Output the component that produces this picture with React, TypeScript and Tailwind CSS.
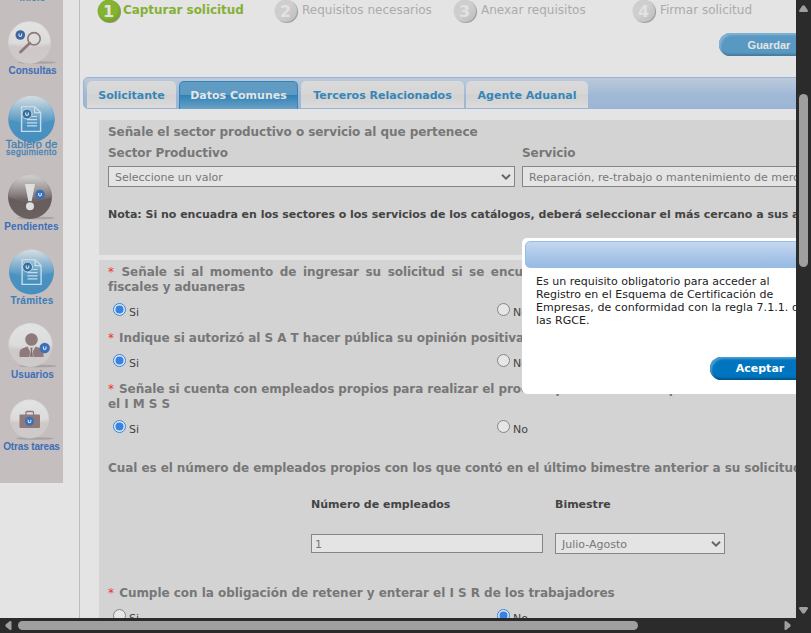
import type { ReactNode } from 'react';

const VERDANA = "font-['DejaVu_Sans',Verdana,sans-serif]";
const ARIAL = "font-['Liberation_Sans',Arial,sans-serif]";

function Defs() {
  return (
    <svg width="0" height="0" className="absolute" aria-hidden="true">
      <defs>
        <linearGradient id="pale" x1="0" y1="0" x2="0" y2="1">
          <stop offset="0" stopColor="#dedede" />
          <stop offset="0.5" stopColor="#d9d7d7" />
          <stop offset="0.62" stopColor="#cec8c8" />
          <stop offset="1" stopColor="#d0cbcb" />
        </linearGradient>
        <linearGradient id="blue" x1="0" y1="0" x2="0" y2="1">
          <stop offset="0" stopColor="#d4dce1" />
          <stop offset="0.3" stopColor="#82b1cf" />
          <stop offset="0.55" stopColor="#4b92c0" />
          <stop offset="1" stopColor="#458fbf" />
        </linearGradient>
        <linearGradient id="brown" x1="0" y1="0" x2="0" y2="1">
          <stop offset="0" stopColor="#cfcdcd" />
          <stop offset="0.45" stopColor="#7c7372" />
          <stop offset="0.55" stopColor="#665c5b" />
          <stop offset="1" stopColor="#6b6160" />
        </linearGradient>
        <linearGradient id="gloss" x1="0" y1="0" x2="0" y2="1">
          <stop offset="0" stopColor="#e6e6e6" stopOpacity="0.8" />
          <stop offset="1" stopColor="#e6e6e6" stopOpacity="0.25" />
        </linearGradient>
        <radialGradient id="stepGreen" cx="0.45" cy="0.4" r="0.6">
          <stop offset="0.7" stopColor="#84b32f" />
          <stop offset="1" stopColor="#71a024" />
        </radialGradient>
        <linearGradient id="stepGrey" x1="0" y1="0" x2="1" y2="1">
          <stop offset="0.5" stopColor="#cecece" />
          <stop offset="1" stopColor="#bcbcbc" />
        </linearGradient>
      </defs>
    </svg>
  );
}

function Badge({ x, y, r = 4.8, fill = '#3a70ba' }: { x: number; y: number; r?: number; fill?: string }) {
  return (
    <g>
      <circle cx={x} cy={y} r={r} fill={fill} />
      <path d={`M${x - 1.3} ${y - 1.6}v1.800q0 1.200 1.300 1.200t1.300 -1.200v-1.800`} fill="none" stroke="#dfe6ee" strokeWidth="1.1" />
    </g>
  );
}

function Ball({ x, y, r, fill }: { x: number; y: number; r: number; fill: string }) {
  return (
    <g>
      <circle cx={x} cy={y} r={r} fill={`url(#${fill})`} />
      <path
        d={`M${x - r + 1} ${y}A${r - 1} ${r - 1} 0 0 1 ${x + r - 1} ${y}Q${x} ${y + r * 0.45} ${x - r + 1} ${y}Z`}
        fill="url(#gloss)"
        opacity={fill === 'pale' ? 0.7 : 0.25}
      />
    </g>
  );
}

function Shadow({ x, y }: { x: number; y: number }) {
  return <ellipse cx={x} cy={y} rx="19" ry="1.3" fill="#a09b9a" opacity="0.75" />;
}

function DocGlyph({ x, y }: { x: number; y: number }) {
  return (
    <g transform={`translate(${x} ${y})`} fill="none" stroke="#c9dbe7">
      <path d="M.6 .6h13l6 6v18.800h-19z" strokeWidth="1.4" />
      <path d="M13.600 .6v6h6" strokeWidth="1.4" />
      <path d="M11 10.500h5M6 13.700h10M6 16.800h10M6 19.900h10" strokeWidth="1.2" />
      <Badge x={6} y={8} r={5} fill="#35719f" />
    </g>
  );
}

function NavItem({ top, height, label, labelClass, children }: {
  top: number; height: number; label: ReactNode; labelClass: string; children: ReactNode;
}) {
  return (
    <li className="flex w-[63px] flex-col items-center">
      <svg width="63" height={height} viewBox={`0 ${top} 63 ${height}`} className="block shrink-0 overflow-visible">{children}</svg>
      <span className={`relative block whitespace-nowrap text-center text-[10px] font-bold leading-[12px] text-[#3c6eb8] ${labelClass}`}>{label}</span>
    </li>
  );
}

function Sidebar() {
  return (
    <ul className={`h-[483px] w-[63px] shrink-0 overflow-hidden bg-[#c4bfbe] ${ARIAL}`}>
      <li className="-mt-[8px] h-[28px] pl-[2px] text-center text-[10px] font-bold leading-[12px] text-[#4389b9]">Inicio</li>
      <NavItem top={20} height={45} label="Consultas" labelClass="pl-[2px] tracking-[-0.05px]">
        <Shadow x={37} y={62.500} />
        <Ball x={29.500} y={42.500} r={21.300} fill="pale" />
        <circle cx="34" cy="38.800" r="6.200" fill="none" stroke="#8d7978" strokeWidth="1.600" />
        <path d="M29.700 43.300L20.500 52" stroke="#8d7978" strokeWidth="2.800" strokeLinecap="round" />
        <Badge x={20.300} y={35} fill="#3b659f" />
      </NavItem>
      <NavItem
        top={77}
        height={62}
        label={<><span className="block text-[11px] leading-[9px] tracking-[0.05px]">Tablero de</span><span className="block text-[8.500px] leading-[6px] tracking-[0.45px]">seguimiento</span></>}
        labelClass="h-[18px] !font-normal [-webkit-text-stroke:0.3px] !text-[#4482b3] !leading-none pt-[1px]"
      >
        <Ball x={31.500} y={119} r={23.300} fill="blue" />
        <DocGlyph x={21} y={106} />
      </NavItem>
      <NavItem top={157} height={64} label="Pendientes" labelClass="tracking-[0.1px]">
        <Shadow x={36} y={218} />
        <Ball x={30} y={197} r={22} fill="brown" />
        <path d="M25 184h10l-3.300 17h-3.400z" fill="#dedede" />
        <circle cx="30" cy="206.300" r="4" fill="#dedede" />
        <Badge x={40} y={194.500} />
      </NavItem>
      <NavItem top={233} height={62} label="Trámites" labelClass="pl-[1px] tracking-[0.25px] !text-[#3c7cb6]">
        <Ball x={31.500} y={272} r={22.500} fill="blue" />
        <DocGlyph x={21.500} y={259} />
      </NavItem>
      <NavItem top={307} height={62} label="Usuarios" labelClass="pl-[2px]">
        <Shadow x={38} y={366} />
        <Ball x={30.500} y={345} r={22} fill="pale" />
        <circle cx="31.500" cy="339.500" r="6.300" fill="#8f7a7b" />
        <path d="M19.500 357v-4q0-4 4-5l4-1.500l4 8l4-8l4 1.500q4 1 4 5v4z" fill="#8f7a7b" />
        <path d="M30 347.500h3l-.7 2.500l1 7h-3.600l1-7z" fill="#7c6869" stroke="#d1cbcb" strokeWidth=".6" />
        <Badge x={44.700} y={348} r={5.200} />
      </NavItem>
      <NavItem top={381} height={60} label="Otras tareas" labelClass="tracking-[-0.15px]">
        <Shadow x={35} y={438.500} />
        <Ball x={29.500} y={419} r={19.500} fill="pale" />
        <path d="M26 415v-2.500q0-1 1-1h5.500q1 0 1 1v2.500" fill="none" stroke="#8f7a7b" strokeWidth="1.300" />
        <rect x="19.500" y="414.500" width="20.500" height="13.500" rx="1" fill="#8f7a7b" />
        <Badge x={29.500} y={421.300} r={4.500} />
      </NavItem>
    </ul>
  );
}

function Step({ n, label, active }: { n: number; label: string; active?: boolean }) {
  return (
    <li className={`flex shrink-0 items-start ${active ? 'w-[177px]' : 'w-[179px]'}`}>
      <svg width="26" height="25" viewBox="0 1 26 25" className="block">
        <circle cx="12.800" cy="12.800" r="11.300" fill={active ? '#6d7f57' : '#8b8b8b'} opacity=".75" />
        <circle cx="11.800" cy="11.800" r="11.200" fill={active ? 'url(#stepGreen)' : 'url(#stepGrey)'} />
        <text x="11.500" y="17.500" textAnchor="middle" fontSize="16" fontWeight="700" fontFamily="DejaVu Sans, sans-serif" fill="#e2e2e2">{n}</text>
      </svg>
      <span className={`mt-[2px] whitespace-nowrap text-[12px] leading-[16px] ${active ? 'font-bold tracking-[-0.04px] text-[#84b135]' : 'ml-[2px] text-[#ababab]'}`}>{label}</span>
    </li>
  );
}

function Tab({ label, width, active }: { label: string; width: string; active?: boolean }) {
  const look = active
    ? 'border border-b-0 border-[#3483b5] bg-[linear-gradient(#629cc3_0%,#5d9ac3_47%,#2f82b6_50%,#6ba2c8_100%)] text-[#e4e4e4] h-[28px] pt-[1px]'
    : 'bg-[linear-gradient(#d9dad9_0%,#d5d6d5_48%,#d0d1d0_52%,#dadbda_100%)] text-[#3586b9] h-[27px] pt-[3px]';
  return <li className={`flex shrink-0 items-center justify-center whitespace-nowrap rounded-t-[5px] text-[11px] font-bold ${width} ${look}`}>{label}</li>;
}

function Chevron() {
  return (
    <svg width="10" height="6" viewBox="0 0 10 6" className="shrink-0">
      <path d="M1 .8L5 4.600L9 .8" fill="none" stroke="#666" strokeWidth="2" />
    </svg>
  );
}

function SelectBox({ value, className }: { value: string; className: string }) {
  return (
    <div className={`flex h-[21px] shrink-0 items-center justify-between overflow-hidden border border-[#858585] bg-[#e4e4e4] pl-[6px] pr-[3px] text-[11px] text-[#777] ${className}`}>
      <span className="whitespace-nowrap pt-[2px] leading-[15px]">{value}</span>
      <Chevron />
    </div>
  );
}

function Radio({ label, checked }: { label: string; checked?: boolean }) {
  return (
    <label className="flex w-[384px] shrink-0 items-start text-[11px] leading-[14px] text-[#444]">
      <svg width="14" height="14" viewBox="0 0 14 14" className="mr-[3px] block">
        <circle cx="7.500" cy="6.500" r="6" fill="#e6e6e6" stroke={checked ? '#3583e2' : '#858585'} />
        {checked && <circle cx="7.500" cy="6.500" r="4" fill="#3583e2" />}
      </svg>
      <span className="mt-[3px]">{label}</span>
    </label>
  );
}

function YesNo({ yes, className }: { yes: boolean; className: string }) {
  return (
    <div className={`flex pl-[4px] ${className}`}>
      <Radio label="Si" checked={yes} />
      <Radio label="No" checked={!yes} />
    </div>
  );
}

const HEADING = 'whitespace-nowrap text-[12px] font-bold leading-[15px] tracking-[-0.07px] text-[#777]';

function Question({ children, className = '' }: { children: ReactNode; className?: string }) {
  return (
    <p className={`${HEADING} ${className}`}>
      <span className="mr-[1px] font-normal text-[#e33]">*</span> {children}
    </p>
  );
}

function Content() {
  return (
    <main className="ml-[16px] w-[717px] shrink-0 overflow-hidden border-l border-[#bcbcbc]">
      <ol className="flex h-[33px] pl-[17px]">
        <Step n={1} label="Capturar solicitud" active />
        <Step n={2} label="Requisitos necesarios" />
        <Step n={3} label="Anexar requisitos" />
        <Step n={4} label="Firmar solicitud" />
      </ol>
      <div className="flex h-[44px] pl-[639px]">
        <button className={`h-[23px] w-[100px] shrink-0 rounded-full bg-[#5899c3] pt-[2px] text-center text-[11px] font-bold text-[#e4e4e4] shadow-[inset_2px_2px_2px_#84b3d0,inset_0_-2px_2px_#487b9c] ${ARIAL}`}>Guardar</button>
      </div>
      <ul className="ml-[3px] flex h-[32px] w-[760px] rounded-l-[5px] border border-[#98b3d5] bg-[linear-gradient(#bccadb,#9fb8d6_60%,#9db6d5)] pl-[3px] pt-[3px]">
        <Tab label="Solicitante" width="w-[89px]" />
        <li className="w-[3px]" />
        <Tab label="Datos Comunes" width="w-[119px]" active />
        <li className="w-[3px]" />
        <Tab label="Terceros Relacionados" width="w-[163px]" />
        <li className="w-[2px]" />
        <Tab label="Agente Aduanal" width="w-[122px]" />
      </ul>
      <section className="ml-[19px] mt-[11px] h-[135px] w-[740px] bg-[#d3d3d3] pl-[9px] pt-[5px]">
        <h2 className={HEADING}>Señale el sector productivo o servicio al que pertenece</h2>
        <div className={`mt-[6px] flex ${HEADING}`}>
          <span className="w-[414px]">Sector Productivo</span>
          <span>Servicio</span>
        </div>
        <div className="mt-[5px] flex gap-[7px]">
          <SelectBox value="Seleccione un valor" className="w-[407px]" />
          <SelectBox value="Reparación, re-trabajo o mantenimiento de mercancías" className="w-[407px] tracking-[0.02px]" />
        </div>
        <p className="mt-[21px] whitespace-nowrap text-[11px] font-bold leading-[14px] tracking-[-0.02px] text-[#444]">Nota: Si no encuadra en los sectores o los servicios de los catálogos, deberá seleccionar el más cercano a sus actividades.</p>
      </section>
      <section className="ml-[19px] mt-[5px] w-[740px] bg-[#d3d3d3] pb-[20px] pl-[9px] pt-[5px]">
        <Question className="[word-spacing:2.500px]">Señale si al momento de ingresar su solicitud si se encuentra</Question>
        <p className={HEADING}>fiscales y aduaneras</p>
        <YesNo yes className="mt-[8px] h-[28px]" />
        <Question>Indique si autorizó al S A T hacer pública su opinión positiva</Question>
        <YesNo yes className="mt-[8px] h-[28px]" />
        <Question>Señale si cuenta con empleados propios para realizar el proceso productivo en el país</Question>
        <p className={HEADING}>el I M S S</p>
        <YesNo yes className="mt-[8px] h-[41px]" />
        <p className={HEADING}>Cual es el número de empleados propios con los que contó en el último bimestre anterior a su solicitud</p>
        <div className="mt-[22px] flex pl-[203px] text-[11px] font-bold leading-[14px] text-[#444]">
          <span className="w-[244px]">Número de empleados</span>
          <span>Bimestre</span>
        </div>
        <div className="mt-[21px] flex items-center gap-[12px] pl-[203px]">
          <div className="h-[19px] w-[232px] border border-[#858585] bg-[#e4e4e4] pl-[3px] text-[11px] leading-[19px] text-[#777]">1</div>
          <SelectBox value="Julio-Agosto" className="w-[170px]" />
        </div>
        <Question className="mt-[32px] !tracking-[-0.035px]">Cumple con la obligación de retener y enterar el I S R de los trabajadores</Question>
        <YesNo yes={false} className="mt-[8px] h-[28px]" />
      </section>
    </main>
  );
}

function Dialog() {
  return (
    <div role="dialog" className="absolute left-[522px] top-[238px] h-[156px] w-[310px] rounded-[5px] bg-white p-[3px]">
      <div className="h-[27px] rounded-[5px] border border-[#98bce5] bg-[linear-gradient(#c5d8ef,#a0c0e6_75%,#99bce3)]" />
      <p className="mt-[7px] whitespace-nowrap pl-[11px] text-[11px] leading-[13px] tracking-[0.01px] text-[#222]">
        Es un requisito obligatorio para acceder al<br />
        Registro en el Esquema de Certificación de<br />
        <span className="tracking-[0.05px]">Empresas, de conformidad con la regla 7.1.1. de</span><br />
        las RGCE.
      </p>
      <button className="ml-[185px] mt-[30px] block h-[23px] w-[100px] rounded-full bg-[#0075bf] pt-[2px] text-center text-[11px] font-bold text-white shadow-[inset_2px_2px_2px_#4b9cd0,inset_0_-2px_2px_#00548a]">Aceptar</button>
    </div>
  );
}

export default function App() {
  return (
    <div className={`grid h-[633px] w-[811px] grid-cols-[796px_15px] grid-rows-[618px_15px] overflow-hidden bg-[#2b2b2b] ${VERDANA}`}>
      <Defs />
      <div className="relative flex h-[618px] w-[796px] overflow-hidden bg-[#e4e4e4]">
        <Sidebar />
        <Content />
        <Dialog />
      </div>
      <div className="flex flex-col items-center">
        <svg width="9" height="7" viewBox="0 0 9 7" className="mt-[5px] block"><path d="M3.500 .5h2L9 5.500q0 1.500-1 1.500H1q-1 0-1-1.500z" fill="#9f9f9f" /></svg>
        <div className="mt-[82px] h-[173px] w-[9px] rounded-full bg-[#9f9f9f]" />
        <svg width="9" height="7" viewBox="0 0 9 7" className="mt-[340px] block"><path d="M3.500 6.500h2L9 1.500q0-1.500-1-1.500H1q-1 0-1 1.500z" fill="#9f9f9f" /></svg>
      </div>
      <div className="flex items-center">
        <svg width="7" height="9" viewBox="0 0 7 9" className="ml-[5px] block"><path d="M6.500 .5v8q-.5 .5-1.500 .5L.5 5.500v-2L5 0q1 0 1.500 .5z" fill="#9f9f9f" /></svg>
        <div className="ml-[6px] h-[9px] w-[620px] rounded-full bg-[#9f9f9f]" />
        <svg width="7" height="9" viewBox="0 0 7 9" className="ml-[146px] block"><path d="M.5 .5v8q.5 .5 1.500 .5L6.500 5.500v-2L2 0q-1 0-1.500 .5z" fill="#9f9f9f" /></svg>
      </div>
    </div>
  );
}
